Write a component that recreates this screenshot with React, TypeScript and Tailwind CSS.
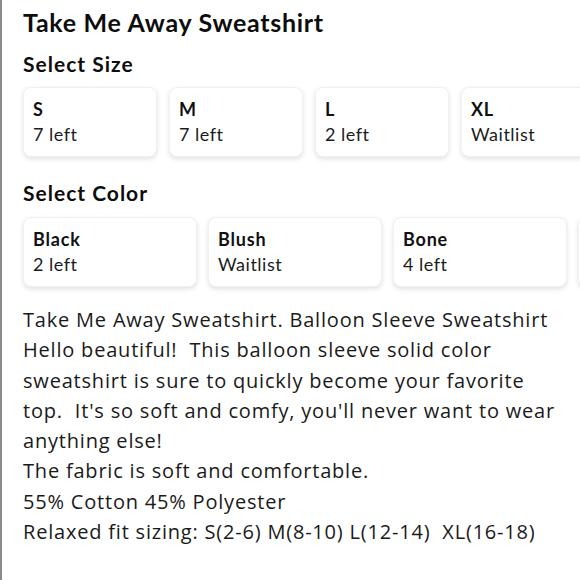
const sizes = [
  { label: "S", note: "7 left" },
  { label: "M", note: "7 left" },
  { label: "L", note: "2 left" },
  { label: "XL", note: "Waitlist" },
];

const colors = [
  { label: "Black", note: "2 left" },
  { label: "Blush", note: "Waitlist" },
  { label: "Bone", note: "4 left" },
  { label: "", note: "" },
];

const description = [
  "Take Me Away Sweatshirt. Balloon Sleeve Sweatshirt",
  "Hello beautiful!  This balloon sleeve solid color",
  "sweatshirt is sure to quickly become your favorite",
  "top.  It's so soft and comfy, you'll never want to wear",
  "anything else!",
  "The fabric is soft and comfortable.",
  "55% Cotton 45% Polyester",
  "Relaxed fit sizing: S(2-6) M(8-10) L(12-14)  XL(16-18)",
];

function OptionCard({ label, note, width }: { label: string; note: string; width: string }) {
  return (
    <div
      className={`${width} h-[70px] shrink-0 rounded-[8px] bg-white border border-[#f1f1f1] shadow-[0_2px_5px_rgba(0,0,0,0.12)] pl-[9px] pt-[9px]`}
    >
      <div className="h-[24px] text-[18px] leading-[24px] font-bold tracking-[0.8px] text-[#111]">{label}</div>
      <div className="h-[26px] text-[18px] leading-[26px] tracking-[0.5px] text-[#1c1c1c]">{note}</div>
    </div>
  );
}

export default function App() {
  return (
    <div
      className="w-[580px] h-[580px] overflow-hidden bg-white border-l-2 border-[#8a8a8a] pl-[21px]"
      style={{ fontFamily: "Lato, 'Noto Sans', sans-serif" }}
    >
      <h1 className="pt-[6px] text-[25px] leading-[32px] font-bold tracking-[0.7px] text-[#0d0d0d]">
        Take Me Away Sweatshirt
      </h1>
      <h2 className="mt-[13px] text-[21px] leading-[26px] font-bold tracking-[1px] text-[#0d0d0d]">
        Select Size
      </h2>
      <div className="mt-[10px] flex gap-[12px] pb-2">
        {sizes.map((s) => (
          <OptionCard key={s.label} label={s.label} note={s.note} width="w-[134px]" />
        ))}
      </div>
      <h2 className="mt-[15px] text-[21px] leading-[26px] font-bold tracking-[1px] text-[#0d0d0d]">
        Select Color
      </h2>
      <div className="mt-[11px] flex gap-[11px] pb-2">
        {colors.map((c, i) => (
          <OptionCard key={i} label={c.label} note={c.note} width="w-[174px]" />
        ))}
      </div>
      <div
        className="mt-[10px] text-[20px] leading-[30.3px] tracking-[0.8px] text-[#1a1a1a] whitespace-pre"
        style={{ fontFamily: "'Open Sans', 'Noto Sans', sans-serif" }}
      >
        {description.map((line, i) => (
          <div key={i}>{line}</div>
        ))}
      </div>
    </div>
  );
}
